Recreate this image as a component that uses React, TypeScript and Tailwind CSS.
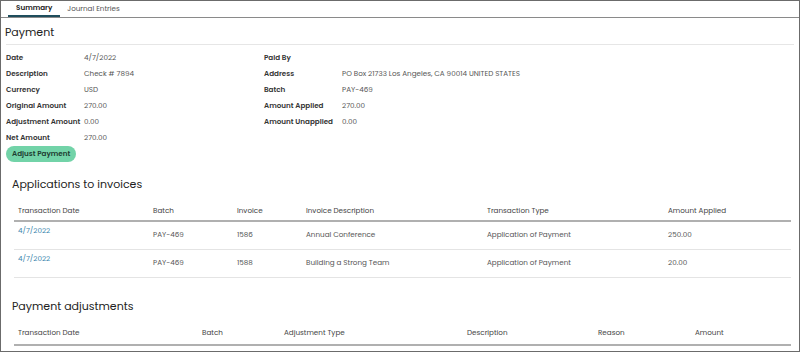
import React from "react";

const F = { fontFamily: '"Poppins", "Open Sans", "Liberation Sans", sans-serif' };

const left = [
  ["Date", "4/7/2022"],
  ["Description", "Check # 7894"],
  ["Currency", "USD"],
  ["Original Amount", "270.00"],
  ["Adjustment Amount", "0.00"],
  ["Net Amount", "270.00"],
];
const right = [
  ["Paid By", ""],
  ["Address", "PO Box 21733 Los Angeles, CA 90014 UNITED STATES"],
  ["Batch", "PAY-469"],
  ["Amount Applied", "270.00"],
  ["Amount Unapplied", "0.00"],
];

function Field({ l, v }: { l: string; v: string }) {
  return (
    <div className="flex h-[16px] items-center">
      <div className="w-[78px] shrink-0 whitespace-nowrap font-semibold text-[#333]">{l}</div>
      <div className="whitespace-nowrap text-[#555]">{v}</div>
    </div>
  );
}

const appCols = ["w-[135px]", "w-[84px]", "w-[69px]", "w-[181px]", "w-[181px]", "flex-1"];
const appHead = ["Transaction Date", "Batch", "Invoice", "Invoice Description", "Transaction Type", "Amount Applied"];
const appRows = [
  ["4/7/2022", "PAY-469", "1586", "Annual Conference", "Application of Payment", "250.00"],
  ["4/7/2022", "PAY-469", "1588", "Building a Strong Team", "Application of Payment", "20.00"],
];
const adjCols = ["w-[184px]", "w-[82px]", "w-[183px]", "w-[131px]", "w-[97px]", "flex-1"];
const adjHead = ["Transaction Date", "Batch", "Adjustment Type", "Description", "Reason", "Amount"];

export default function App() {
  return (
    <div style={F} className="w-[800px] h-[352px] border border-[#6b6b6b] bg-white overflow-hidden text-[7.2px] text-[#444]">
      <div className="h-[17px] border-b border-[#8a8a8a] flex items-end pl-[7px]">
        <div className="h-[16px] px-[8px] border-b-2 border-[#1e4d5c] font-semibold text-[#222] flex items-center">Summary</div>
        <div className="h-[16px] px-[7px] flex items-center text-[#555]">Journal Entries</div>
      </div>
      <div className="px-[5px]">
        <div className="h-[27px] pt-[3px] border-b border-[#e6e6e6] flex items-center text-[11px] text-[#222]">
          <span className="ml-[-1px]">Payment</span>
        </div>
        <div className="flex pt-[5px]">
          <div className="w-[258px] shrink-0">
            {left.map(([l, v]) => <Field key={l} l={l} v={v} />)}
          </div>
          <div className="flex-1">
            {right.map(([l, v]) => <Field key={l} l={l} v={v} />)}
          </div>
        </div>
        <div className="inline-flex h-[16px] items-center rounded-full bg-[#72d3a8] px-[6px] font-semibold text-[#1d3b30]">Adjust Payment</div>
      </div>
      <div className="pl-[13px] pr-[8px]">
        <div className="mt-[12px] h-[20px] flex items-center text-[11px] text-[#222]">
          <span className="ml-[-2px]">Applications to invoices</span>
        </div>
        <div className="mt-[8px] h-[20px] flex items-center border-b-2 border-[#b0b0b0]">
          {appHead.map((h, i) => <div key={h} className={`${appCols[i]} pl-[4px] text-[#444]`}>{h}</div>)}
        </div>
        {appRows.map((r, ri) => (
          <div key={ri} className="h-[28px] flex border-b border-[#e4e4e4]">
            {r.map((c, i) => i === 0 ? (
              <div key={i} className={`${appCols[i]} pl-[4px] pt-[4px] text-[#3b86ad]`}>{c}</div>
            ) : (
              <div key={i} className={`${appCols[i]} pl-[4px] flex items-center text-[#555]`}>{c}</div>
            ))}
          </div>
        ))}
        <div className="mt-[18px] h-[20px] flex items-center text-[11px] text-[#222]">
          <span className="ml-[-2px]">Payment adjustments</span>
        </div>
        <div className="mt-[6px] h-[24px] flex items-center border-b-2 border-[#b0b0b0]">
          {adjHead.map((h, i) => <div key={h} className={`${adjCols[i]} pl-[4px] text-[#444]`}>{h}</div>)}
        </div>
      </div>
    </div>
  );
}
